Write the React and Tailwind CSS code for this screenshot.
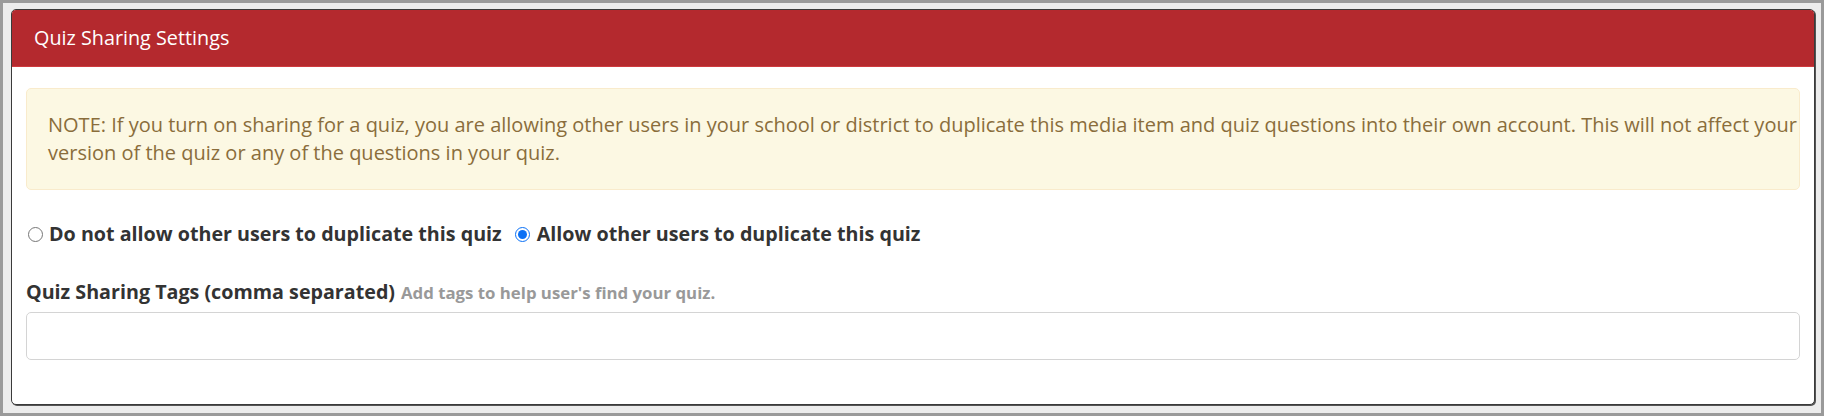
export default function App() {
  return (
    <div className="w-[1824px] h-[416px] border-[3px] border-[#9a9a9a] bg-[#ececec] pl-[8px] pt-[6px] pr-[6px] pb-[8px] overflow-hidden" style={{ fontFamily: '"Open Sans", "Liberation Sans", sans-serif' }}>
      <div className="h-full rounded-[5px] border border-[#3a3a3a] bg-white shadow-[1px_1px_0_#555] flex flex-col overflow-hidden">
        <div className="h-[57px] bg-[#b4292e] border-b border-[#cf3a3e] flex items-center pl-[22px]">
          <span className="text-white text-[19.8px] leading-none">Quiz Sharing Settings</span>
        </div>
        <div className="px-[14px] pt-[21px] flex flex-col">
          <div className="rounded-[5px] border border-[#f9ebcc] bg-[#fcf8e3] text-[#8a6d3b] text-[20px] leading-[28px] pl-[21px] pr-0 py-[22px] whitespace-nowrap">
            NOTE: If you turn on sharing for a quiz, you are allowing other users in your school or district to duplicate this media item and quiz questions into their own account. This will not affect your
            <br />
            version of the quiz or any of the questions in your quiz.
          </div>
          <div className="flex items-center mt-[31px] text-[#333] text-[19.7px] font-bold leading-[26px]">
            <label className="flex items-center">
              <input type="radio" name="share" className="w-[15px] h-[15px] m-0 ml-[2px] mr-[6px]" />
              <span>Do not allow other users to duplicate this quiz</span>
            </label>
            <label className="flex items-center ml-[13px]">
              <input type="radio" name="share" defaultChecked className="w-[15px] h-[15px] m-0 mr-[7px] accent-[#0a70f5]" />
              <span>Allow other users to duplicate this quiz</span>
            </label>
          </div>
          <div className="mt-[32px] flex items-baseline text-[#333]">
            <span className="text-[19.7px] font-bold leading-[26px]">Quiz Sharing Tags (comma separated)</span>
            <span className="ml-[6px] text-[16.8px] font-bold text-[#999]">Add tags to help user's find your quiz.</span>
          </div>
          <input type="text" className="mt-[7px] h-[48px] w-full rounded-[5px] border border-[#d4d4d4] bg-white px-3 outline-none" />
        </div>
      </div>
    </div>
  );
}
